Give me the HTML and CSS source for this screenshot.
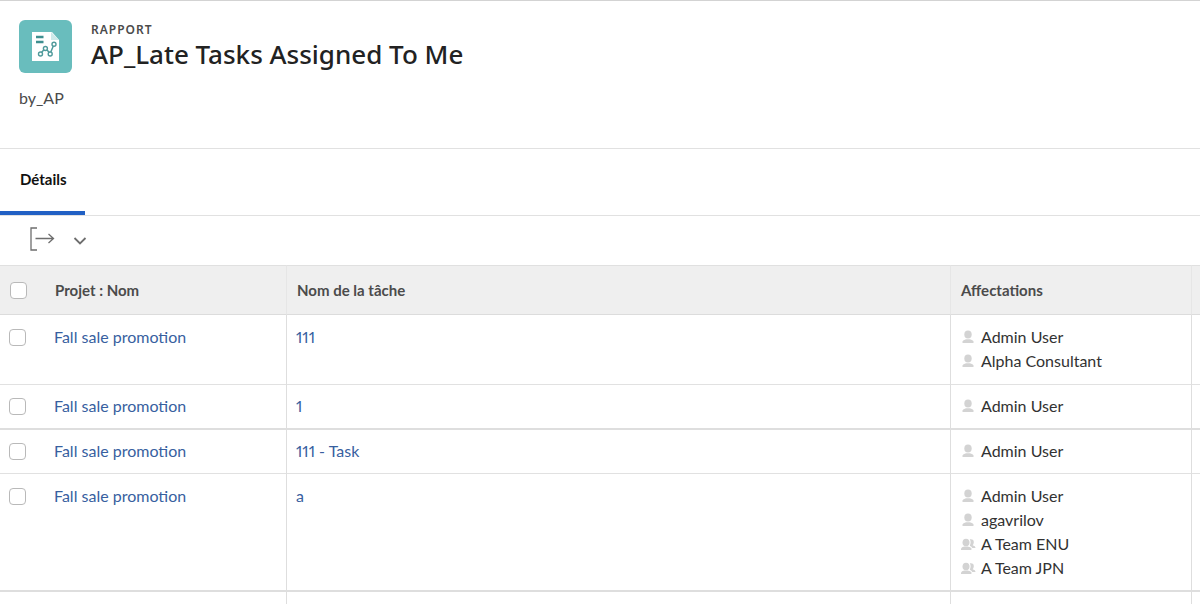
FILE: index.html
```html
<!DOCTYPE html>
<html lang="fr">
<head>
<meta charset="utf-8">
<title>AP_Late Tasks Assigned To Me</title>
<link rel="stylesheet" href="styles.css">
</head>
<body>
<svg class="sprite" aria-hidden="true">
  <symbol id="user" viewBox="0 0 14 14"><ellipse cx="7" cy="4.500" rx="3.700" ry="4"/><path d="M1.500 13V11.300Q2 10 5 9.200H9Q12 10 12.500 11.300V13Z"/></symbol>
  <symbol id="team" viewBox="0 0 16 14"><ellipse cx="6" cy="5.500" rx="3.500" ry="3.800"/><path d="M1 13V11.500Q1.600 10.300 4.300 9.600H7.700Q10.800 10.300 11.400 11.500V13Z"/><path d="M9.800 2.300Q14 1.800 13.800 5.400Q13.500 7.700 12.600 8.200Q15.500 9 15.600 11H12.300Q11.700 9.500 9.800 8.700Q11.500 5 9.800 2.300Z"/></symbol>
</svg>
<header class="page-header">
  <div class="heading">
    <svg class="report-icon" viewBox="0 0 53 53" aria-hidden="true">
      <rect width="53" height="53" rx="6" fill="#69bdbd"/>
      <path d="M13 12H33L40 20V41H13Z" fill="#fff"/>
      <path d="M32 12V20H40Z" fill="#cdeaea"/>
      <path d="M17 17H24.500M17 22H24.500" stroke="#3f8f90" stroke-width="2.400"/>
      <path d="M22.500 32.500L24.700 30M28 30L30.300 32.600M31.800 32L34.300 26" fill="none" stroke="#4f9a9b" stroke-width="1.500"/>
      <g fill="#fff" stroke="#4f9a9b" stroke-width="1.400"><circle cx="21.500" cy="34" r="2"/><circle cx="26.400" cy="28.500" r="2"/><circle cx="31.200" cy="34" r="2"/><circle cx="35" cy="24.300" r="2"/></g>
    </svg>
    <div>
      <p class="kind">RAPPORT</p>
      <h1 class="title">AP_Late Tasks Assigned To Me</h1>
    </div>
  </div>
  <p class="author">by_AP</p>
</header>
<nav class="tabs"><a class="tab" href="#details" aria-current="page">Détails</a></nav>
<main id="details">
  <div class="toolbar">
    <button class="tool" type="button" aria-label="Exporter"><svg width="26" height="26" viewBox="0 0 26 26"><path d="M8 2H2V24H8M6.500 12.500H24.500M19.500 8L24.500 12.500L19.500 17"/></svg></button>
    <button class="tool" type="button" aria-label="Options d'exportation"><svg width="14" height="26" viewBox="0 0 14 26"><path class="thick" d="M1.500 12L7 17.500L12.500 12"/></svg></button>
  </div>
  <table class="report">
    <colgroup><col class="col-check"><col class="col-project"><col><col class="col-assign"><col class="col-end"></colgroup>
    <thead>
      <tr><th><input class="check" type="checkbox" aria-label="Tout sélectionner"></th><th>Projet : Nom</th><th>Nom de la tâche</th><th>Affectations</th><th></th></tr>
    </thead>
    <tbody>
      <tr class="tall"><td><input class="check" type="checkbox" aria-label="Sélectionner 111"></td><td><a href="#p1">Fall sale promotion</a></td><td><a href="#t1">111</a></td>
        <td><ul class="people"><li><svg><use href="#user"/></svg>Admin User</li><li><svg><use href="#user"/></svg>Alpha Consultant</li></ul></td><td></td></tr>
      <tr class="heavy"><td><input class="check" type="checkbox" aria-label="Sélectionner 1"></td><td><a href="#p2">Fall sale promotion</a></td><td><a href="#t2">1</a></td>
        <td><ul class="people"><li><svg><use href="#user"/></svg>Admin User</li></ul></td><td></td></tr>
      <tr><td><input class="check" type="checkbox" aria-label="Sélectionner 111 - Task"></td><td><a href="#p3">Fall sale promotion</a></td><td><a href="#t3">111 - Task</a></td>
        <td><ul class="people"><li><svg><use href="#user"/></svg>Admin User</li></ul></td><td></td></tr>
      <tr class="heavy last"><td><input class="check" type="checkbox" aria-label="Sélectionner a"></td><td><a href="#p4">Fall sale promotion</a></td><td><a href="#t4">a</a></td>
        <td><ul class="people"><li><svg><use href="#user"/></svg>Admin User</li><li><svg><use href="#user"/></svg>agavrilov</li><li><svg><use href="#team"/></svg>A Team ENU</li><li><svg><use href="#team"/></svg>A Team JPN</li></ul></td><td></td></tr>
      <tr class="filler"><td></td><td></td><td></td><td></td><td></td></tr>
    </tbody>
  </table>
</main>
</body>
</html>
```
FILE: styles.css
```css
* { box-sizing: border-box; }
body { margin: 0; background: #fff; color: #323232; font-family: Lato, "Noto Sans", sans-serif; font-size: 16px; line-height: 24px; font-variant-numeric: proportional-nums; }
p, h1, ul { margin: 0; padding: 0; }
.sprite { position: absolute; width: 0; height: 0; }
.page-header { border-top: 1px solid #d3d3d3; border-bottom: 1px solid #e1e1e1; padding: 19px 19px 38px; }
.heading { display: flex; gap: 19px; }
.report-icon { width: 53px; height: 53px; flex: none; }
.kind { font-family: "Noto Sans", sans-serif; font-size: 12px; line-height: 20px; font-weight: 600; letter-spacing: 1px; color: #4b4b4b; }
.title { font-family: "Noto Sans", sans-serif; font-size: 26px; line-height: 28px; font-weight: 500; color: #222; }
.author { margin-top: 13px; color: #4b4b4b; }
.tabs { display: flex; height: 67px; border-bottom: 1px solid #e1e1e1; }
.tab { display: block; padding: 18px 18px 0 20px; font-size: 15px; font-weight: 700; color: #111; text-decoration: none; border-bottom: 4px solid #2160c4; }
.toolbar { display: flex; gap: 18px; padding: 10px 29px 13px; }
.tool { display: flex; padding: 0; border: 0; background: none; }
.tool path { fill: none; stroke: #6e6e6e; stroke-width: 1.3; }
.tool .thick { stroke-width: 1.8; }
.report { width: 100%; table-layout: fixed; border-collapse: separate; border-spacing: 0; }
.col-check { width: 45px; }
.col-project { width: 242px; }
.col-assign { width: 241px; }
.col-end { width: 8px; }
th, td { text-align: left; border-right: 1px solid #dedede; }
th:first-child, td:first-child, th:last-child, td:last-child { border-right: 0; }
th { height: 50px; padding: 0 10px; background: #efefef; border-top: 1px solid #e0e0e0; border-bottom: 1px solid #dcdcdc; border-right-color: #e6e6e6; font-size: 15px; font-weight: 700; color: #4b4b4b; }
td { height: 44px; padding: 9px; vertical-align: top; border-bottom: 1px solid #e1e1e1; }
th:last-child, td:last-child { padding: 0; }
th:first-child { padding: 0 0 0 10px; }
.tall td { height: 70px; padding-top: 10px; }
.heavy td { height: 45px; border-bottom: 2px solid #dedede; }
.last td { height: 118px; padding-top: 10px; }
.filler td { height: 12px; padding: 0; border-bottom: 0; }
td a { color: #385f9f; text-decoration: none; }
.check { appearance: none; display: block; width: 17px; height: 17px; margin: 0; border: 1px solid #b9b9b9; border-radius: 4px; background: #fff; }
td .check { margin-top: 4px; }
.people { list-style: none; }
.people li { display: flex; align-items: center; gap: 5px; }
.people svg { width: 16px; height: 14px; fill: #d3d3d3; }
```
